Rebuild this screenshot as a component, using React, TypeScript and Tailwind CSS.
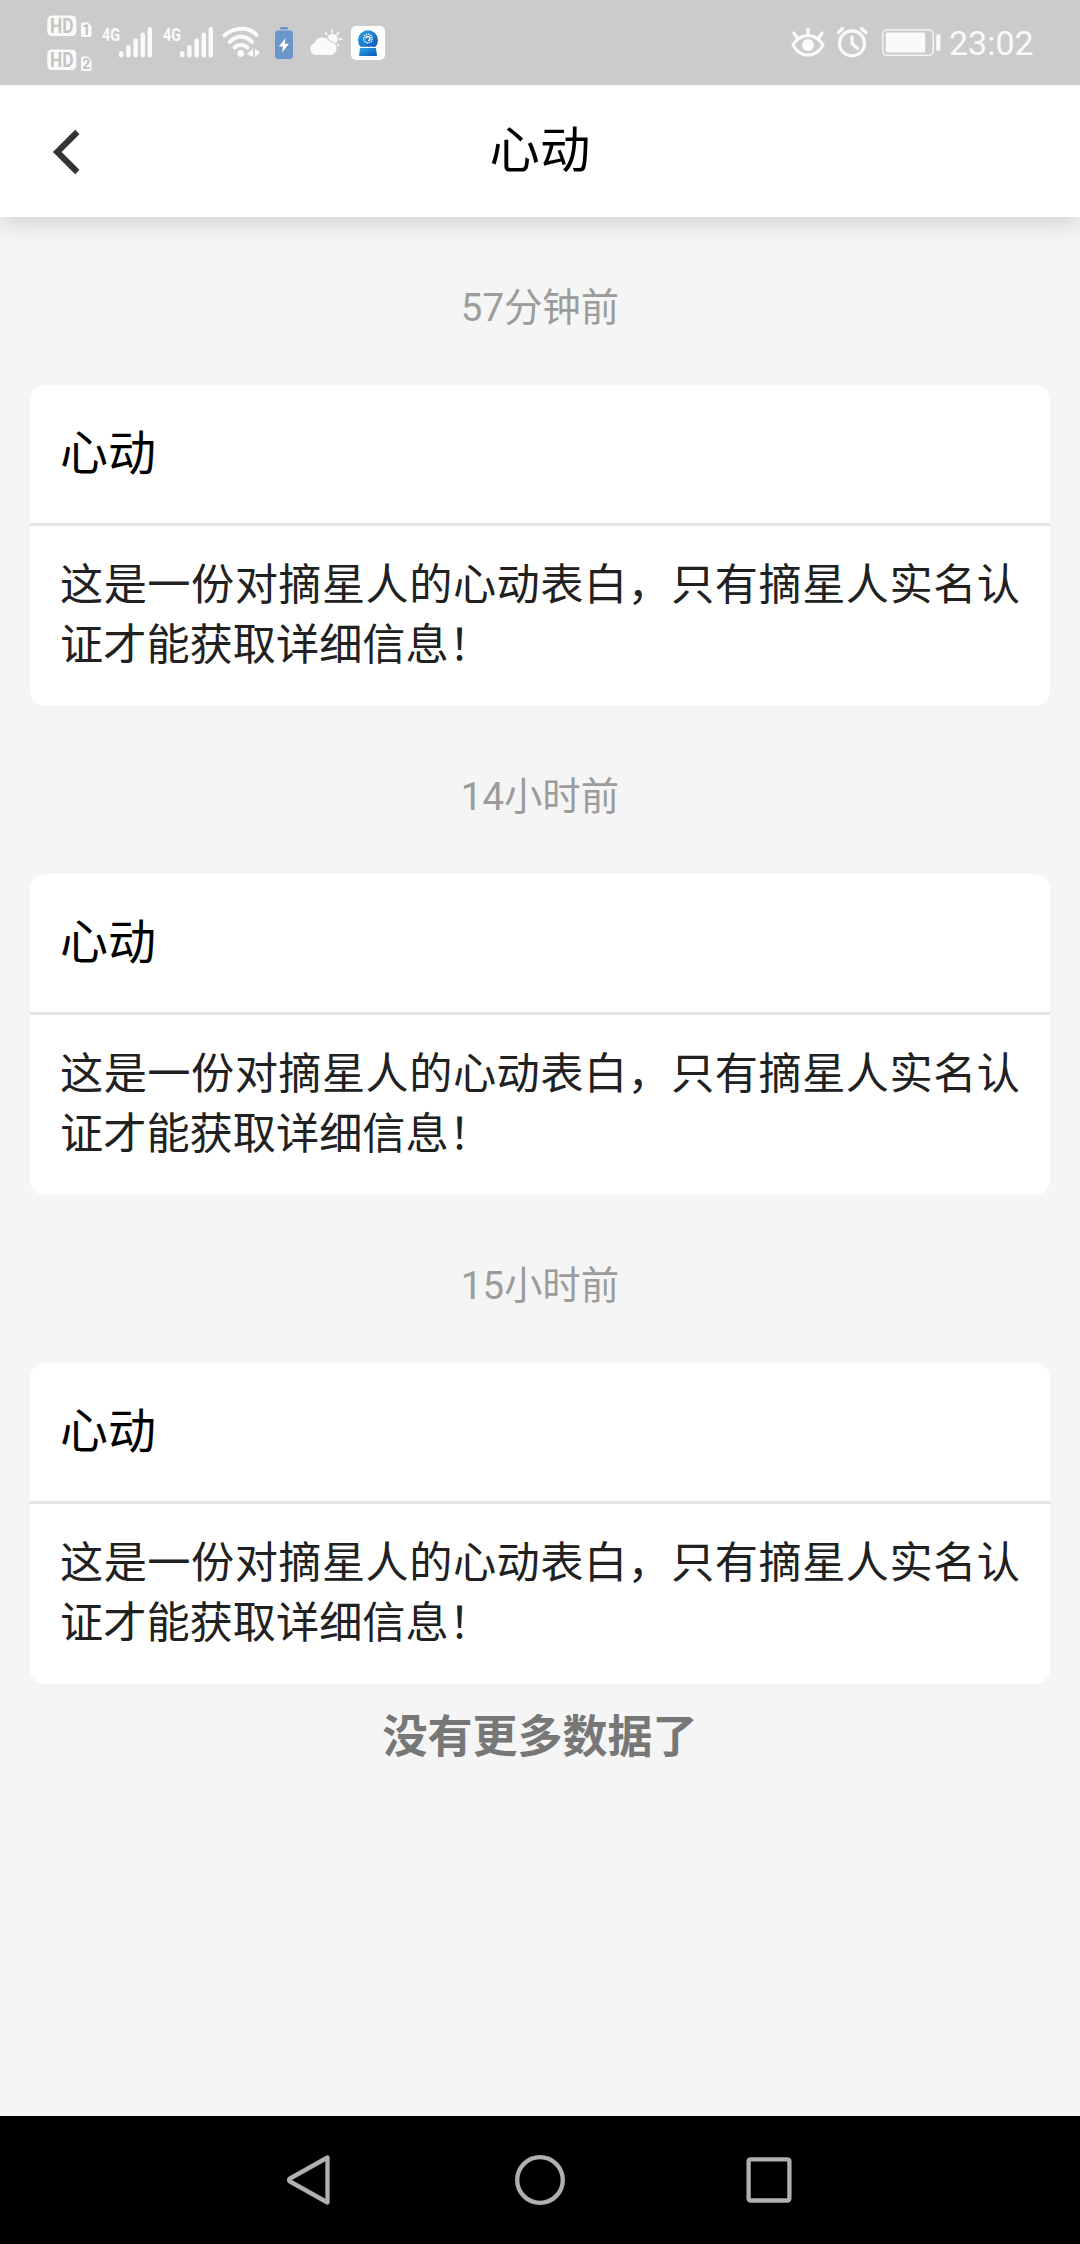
const FONT = 'font-["Roboto","Noto_Sans_CJK_SC",sans-serif]';

function Signal() {
  return (
    <svg className="h-[36px] w-[52px]" viewBox="0 0 52 36" fill="#fafafa">
      <text x="0" y="17" fontSize="19" fontWeight="700" textLength="18" lengthAdjust="spacingAndGlyphs" fontFamily="Roboto">
        4G
      </text>
      <rect x="17" y="27" width="4.4" height="6.5" rx="2.2" />
      <rect x="24.2" y="21" width="4.4" height="12.5" rx="2" />
      <rect x="31.4" y="14.5" width="4.4" height="19" rx="2" />
      <rect x="38.6" y="8.500" width="4.4" height="25" rx="2" />
      <rect x="45.6" y="3" width="4.4" height="30.500" rx="2" />
    </svg>
  );
}

function HdBadge({ slot }: { slot: string }) {
  return (
    <svg className="h-[22px] w-[46px]" viewBox="0 0 46 22">
      <rect x="0.300" y="0.500" width="29" height="20.500" rx="4.500" fill="#fafafa" />
      <text x="3" y="17.600" fontSize="19.500" fontWeight="700" textLength="23.500" lengthAdjust="spacingAndGlyphs" fontFamily="Roboto" fill="#c4c4c4">
        HD
      </text>
      <path d="M36 7.500h5l3.500 4v9a1.500 1.500 0 0 1-1.500 1.500h-7.500a1.500 1.500 0 0 1-1.500-1.500v-11.500a1.500 1.500 0 0 1 1.500-1.500z" fill="#fafafa" />
      <text x="39.300" y="20" fontSize="14" fontWeight="700" textAnchor="middle" fontFamily="Roboto" fill="#c0c0c0">
        {slot}
      </text>
    </svg>
  );
}

function StatusBar() {
  return (
    <div className="relative z-10 flex h-[85px] shrink-0 items-start bg-[#cbcbcb]">
      <div className="ml-[47px] mt-[15px] flex w-[55px] flex-col gap-[12px]">
        <HdBadge slot="1" />
        <HdBadge slot="2" />
      </div>
      <div className="mt-[24px] flex gap-[9px]">
        <Signal />
        <Signal />
      </div>
      <svg className="ml-[5px] mt-[24px] h-[36px] w-[42px]" viewBox="0 0 42 36" fill="none" stroke="#fafafa" strokeWidth="4" strokeLinecap="round">
        <path d="M4.500 11.500C14 2.500 29.500 2.500 36.500 11" />
        <path d="M9.800 18C16 11 26 11 32 18" />
        <path d="M14.500 23.500C18 20 24 20 27.500 23.500" />
        <circle cx="20.700" cy="29.500" r="3.400" fill="#fafafa" stroke="none" />
        <path d="M33 24.500V33L26.500 30ZM34.800 33.500V25L40 28Z" fill="#fafafa" stroke="none" />
      </svg>
      <svg className="ml-[12px] mt-[26px] h-[34px] w-[20px]" viewBox="0 0 20 34">
        <rect x="6" y="1" width="8" height="2.500" rx="1" fill="#6b96c9" />
        <rect x="1" y="4.500" width="18" height="28.500" rx="3" fill="#6b96c9" />
        <path d="M11.500 12L4.800 20.500H9L8 26.500L15 17.800H10.800Z" fill="#fff" />
      </svg>
      <svg className="ml-[16px] mt-[28px] h-[30px] w-[34px]" viewBox="0 0 34 30">
        <circle cx="22.500" cy="11" r="5.300" fill="#fafafa" />
        <path d="M22 2.300V4.300M15.500 5L16.700 6.500M28.500 4.700L27 6.500M29.500 11.200H31.500M27.500 16.500L28.500 17.500" stroke="#fafafa" strokeWidth="1.800" strokeLinecap="round" />
        <path
          d="M6.200 27a6 6 0 0 1-1.700-11.700A8.300 8.300 0 0 1 19.700 13.700a6.700 6.700 0 0 1 1.300 13.300z"
          fill="#fafafa"
          stroke="#cbcbcb"
          strokeWidth="2"
          paintOrder="stroke"
        />
      </svg>
      <svg className="ml-[7px] mt-[26px] h-[34px] w-[34px]" viewBox="0 0 34 34">
        <defs>
          <linearGradient id="appBlue" x1="0" y1="0" x2="1" y2="1">
            <stop offset="0" stopColor="#2aa3ea" />
            <stop offset="1" stopColor="#1059b6" />
          </linearGradient>
        </defs>
        <rect width="34" height="34" rx="5" fill="#fff" />
        <path d="M9.500 20.800a10 10 0 1 1 15 0z" fill="url(#appBlue)" />
        <path d="M9 22H25L26 30H8Z" fill="url(#appBlue)" />
        <circle cx="17" cy="12.500" r="4.300" fill="none" stroke="#e9f4fd" strokeWidth="1.400" strokeDasharray="1.500 0.700" />
        <path d="M15 12.500a2 2 0 1 1 2 2" fill="none" stroke="#fff" strokeWidth="1.400" />
      </svg>
      <svg className="ml-auto mt-[26px] h-[33px] w-[36px]" viewBox="0 0 36 33" fill="none" stroke="#fafafa" strokeWidth="3.200" strokeLinecap="round">
        <path d="M3 19C10.500 6.500 25.500 6.500 33 19C25.500 32.500 10.500 32.500 3 19Z" strokeLinejoin="round" />
        <circle cx="18" cy="19" r="6" fill="#fafafa" stroke="none" />
        <path d="M18 3.200V8M3.800 7L7 11.500M32 7L29 11.500" />
      </svg>
      <svg className="ml-[9px] mt-[26px] h-[33px] w-[34px]" viewBox="0 0 34 33" fill="none" stroke="#fafafa" strokeWidth="3.200" strokeLinecap="round">
        <circle cx="17" cy="17.400" r="12.500" />
        <path d="M17 11V17.500L22.500 22.500M3.300 6.500L7.500 2.500M26.500 2.500L31 6.500" />
      </svg>
      <svg className="ml-[12px] mt-[28px] h-[30px] w-[60px]" viewBox="0 0 60 30">
        <rect x="1.700" y="1.700" width="50.500" height="25.500" rx="4.500" fill="none" stroke="#f2f2f2" strokeWidth="1.500" />
        <rect x="4.700" y="4.500" width="39.500" height="20" rx="1.500" fill="#fafafa" />
        <rect x="55.200" y="6" width="4.300" height="17" rx="2" fill="#fafafa" />
      </svg>
      <span className="mr-[46px] ml-[8px] mt-[23px] w-[85px] text-[34px] leading-[40px] whitespace-nowrap text-[#fafafa]">23:02</span>
    </div>
  );
}

function Message({ time }: { time: string }) {
  return (
    <section className="px-[30px]">
      <p className="pt-[62px] pb-[48px] text-center text-[38.4px] leading-[58px] text-[#9c9c9c]">{time}</p>
      <article className="h-[321px] rounded-[15px] bg-white">
        <h2 className="h-[141px] border-b-[3px] border-[#e5e5e5] px-[30px] text-[48px] leading-[137px] text-black">心动</h2>
        <p className="px-[30px] pt-[30px] text-justify text-[43.2px] leading-[60px] text-[#212121]">
          这是一份对摘星人的心动表白，只有摘星人实名认证才能获取详细信息！
        </p>
      </article>
    </section>
  );
}

export default function App() {
  return (
    <div lang="zh-CN" className={`flex h-[2244px] w-[1080px] flex-col overflow-hidden bg-[#f5f5f5] ${FONT}`}>
      <StatusBar />
      <header className="relative grid h-[132px] shrink-0 grid-cols-[1fr_auto_1fr] items-center bg-white shadow-[0_3px_27px_rgba(0,0,0,0.18)]">
        <svg className="ml-[52px] mt-[1px] h-[46px] w-[28px]" viewBox="0 0 28 46" fill="none" stroke="#333" strokeWidth="6">
          <path d="M25.300 3L5.200 23L25.300 43" />
        </svg>
        <h1 className="text-[50.4px] leading-[130px] text-black">心动</h1>
      </header>
      <main className="grow">
        <Message time="57分钟前" />
        <Message time="14小时前" />
        <Message time="15小时前" />
        <p className="pt-[21px] text-center text-[45px] font-bold leading-[66px] text-[#777]">没有更多数据了</p>
      </main>
      <nav className="flex h-[128px] shrink-0 items-center justify-center bg-black pr-[2px]">
        <svg className="h-[52px] w-[46px]" viewBox="0 0 46 52" fill="none" stroke="#b0b0b0" strokeWidth="4.300" strokeLinejoin="round">
          <path d="M41.500 3.500V48.500L4 27.500Q2 26 4 24.500Z" />
        </svg>
        <svg className="mr-[180px] ml-[182px] h-[52px] w-[52px]" viewBox="0 0 52 52" fill="none" stroke="#b0b0b0" strokeWidth="4.300">
          <circle cx="26" cy="26" r="22.800" />
        </svg>
        <svg className="h-[52px] w-[46px]" viewBox="0 0 46 52" fill="none" stroke="#b0b0b0" strokeWidth="4.300">
          <rect x="2.600" y="5.300" width="40.800" height="41.200" rx="2" />
        </svg>
      </nav>
    </div>
  );
}
